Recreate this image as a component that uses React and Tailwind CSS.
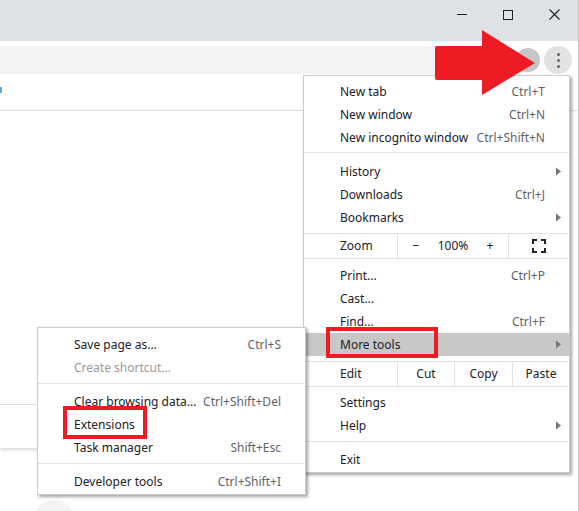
import React from 'react';

const font = { fontFamily: '"Segoe UI", "Noto Sans", sans-serif' };

function Arrow() {
  return (
    <svg width="7" height="9" viewBox="0 0 7 9" className="text-[#767676]">
      <path d="M1 0.5 L6 4.5 L1 8.5 Z" fill="currentColor" />
    </svg>
  );
}

function Item({ label, shortcut, submenu, muted, active }) {
  return (
    <div
      className={`relative flex items-center h-[23px] pl-[36px] pr-[24px] ${
        active ? 'bg-[#c8c8c8]' : ''
      }`}
    >
      <span className={`flex-1 ${muted ? 'text-[#9a9a9a]' : 'text-[#202124]'}`}>{label}</span>
      {shortcut && <span className="text-[#5f6368]">{shortcut}</span>}
      {submenu && (
        <span className="absolute right-[7px] top-[7px]">
          <Arrow />
        </span>
      )}
    </div>
  );
}

function Sep({ top = 4, bottom = 6 }) {
  return <div className="h-px bg-[#e3e3e3]" style={{ marginTop: top, marginBottom: bottom }} />;
}

function WindowControls() {
  return (
    <div className="flex justify-end pr-[1px]">
      <div className="w-[46px] h-[29px] flex items-center justify-center">
        <div className="w-[10px] h-px bg-[#202124]" />
      </div>
      <div className="w-[46px] h-[29px] flex items-center justify-center">
        <div className="w-[10px] h-[10px] border border-[#202124]" />
      </div>
      <div className="w-[46px] h-[29px] flex items-center justify-center">
        <svg width="11" height="11" viewBox="0 0 11 11">
          <path d="M0.5 0.5 L10.5 10.5 M10.5 0.5 L0.5 10.5" stroke="#202124" strokeWidth="1.1" />
        </svg>
      </div>
    </div>
  );
}

function MainMenu() {
  return (
    <div className="absolute left-[303px] top-[75px] w-[267px] bg-white border border-[#cccccc] shadow-[2px_2px_3px_rgba(0,0,0,0.35)] text-[12px] pt-[4px] pb-[1px]">
      <Item label="New tab" shortcut="Ctrl+T" />
      <Item label="New window" shortcut="Ctrl+N" />
      <Item label="New incognito window" shortcut="Ctrl+Shift+N" />
      <Sep top={3} bottom={7} />
      <Item label="History" submenu />
      <Item label="Downloads" shortcut="Ctrl+J" />
      <Item label="Bookmarks" submenu />
      <Sep top={4} bottom={0} />
      <div className="flex h-[24px] items-center">
        <div className="w-[93px] pl-[36px] text-[#202124]">Zoom</div>
        <div className="w-[111px] h-full flex items-center border-l border-[#e3e3e3] text-[#202124]">
          <span className="w-[36px] text-center">−</span>
          <span className="flex-1 text-center">100%</span>
          <span className="w-[36px] text-center">+</span>
        </div>
        <div className="flex-1 h-full flex items-center justify-center border-l border-[#e3e3e3]">
          <svg width="14" height="14" viewBox="0 0 14 14" fill="none" stroke="#202124" strokeWidth="2">
            <path d="M1 5 V1 H5 M9 1 H13 V5 M13 9 V13 H9 M5 13 H1 V9" />
          </svg>
        </div>
      </div>
      <Sep top={0} bottom={5} />
      <Item label="Print..." shortcut="Ctrl+P" />
      <Item label="Cast..." />
      <Item label="Find..." shortcut="Ctrl+F" />
      <Item label="More tools" submenu active />
      <Sep top={5} bottom={0} />
      <div className="flex h-[24px] items-center text-[#202124]">
        <div className="w-[93px] pl-[36px]">Edit</div>
        <div className="w-[57px] h-full flex items-center justify-center border-l border-[#e3e3e3]">Cut</div>
        <div className="w-[58px] h-full flex items-center justify-center border-l border-[#e3e3e3]">Copy</div>
        <div className="flex-1 h-full flex items-center justify-center border-l border-[#e3e3e3]">Paste</div>
      </div>
      <Sep top={0} bottom={4} />
      <Item label="Settings" />
      <Item label="Help" submenu />
      <Sep top={4} bottom={6} />
      <Item label="Exit" />
    </div>
  );
}

function ToolsMenu() {
  return (
    <div className="absolute left-[37px] top-[327px] w-[269px] bg-white border border-[#cccccc] shadow-[2px_2px_3px_rgba(0,0,0,0.35)] text-[12px] pt-[5px] pb-[1px]">
      <Item label="Save page as..." shortcut="Ctrl+S" />
      <Item label="Create shortcut..." muted />
      <Sep top={4} bottom={6} />
      <Item label="Clear browsing data..." shortcut="Ctrl+Shift+Del" />
      <Item label="Extensions" />
      <Item label="Task manager" shortcut="Shift+Esc" />
      <Sep top={4} bottom={6} />
      <Item label="Developer tools" shortcut="Ctrl+Shift+I" />
    </div>
  );
}

export default function App() {
  return (
    <div className="relative w-[579px] h-[511px] overflow-hidden bg-white border-r border-[#c4c4c4]" style={font}>
      {/* tab strip */}
      <div className="h-[41px] bg-[#dee1e6]">
        <WindowControls />
      </div>

      {/* toolbar */}
      <div className="pt-[5px] border-b border-[#dadce0]">
        <div className="flex items-center h-[28px]">
          <div className="w-[510px] h-full bg-[#f1f3f4] rounded-r-[14px]" />
          <div className="ml-[6px] w-[24px] h-[24px] rounded-full bg-[#c6c6c6]" />
          <div className="ml-[4px] w-[28px] h-[28px] rounded-full bg-[#e2e2e2] flex flex-col items-center justify-center gap-[3px]">
            <span className="w-[3px] h-[3px] rounded-full bg-[#5f6368]" />
            <span className="w-[3px] h-[3px] rounded-full bg-[#5f6368]" />
            <span className="w-[3px] h-[3px] rounded-full bg-[#5f6368]" />
          </div>
        </div>
        <div className="h-[36px] flex items-center">
          <div className="w-[2px] h-[6px] bg-[#5aa7e8] -mt-[4px]" />
        </div>
      </div>

      {/* page content */}
      <div className="mt-[293px] w-[330px] h-[44px] border-t border-[#dadce0] shadow-[0_2px_3px_rgba(0,0,0,0.15)]" />
      <div className="mt-[52px] ml-[33px] w-[42px] h-[42px] rounded-full bg-[#f1f3f4]" />

      <MainMenu />
      <ToolsMenu />

      {/* annotations */}
      <svg className="absolute left-0 top-0 pointer-events-none" width="579" height="511">
        <path d="M437 46 H482 V30 L535 63 L482 95 V80 H437 Q435 80 435 78 V48 Q435 46 437 46 Z" fill="#ed1c24" />
        <rect x="328" y="329" width="108" height="27" fill="none" stroke="#ed1c24" strokeWidth="4" />
        <rect x="65" y="408" width="80" height="29" fill="none" stroke="#ed1c24" strokeWidth="4" />
      </svg>
    </div>
  );
}
